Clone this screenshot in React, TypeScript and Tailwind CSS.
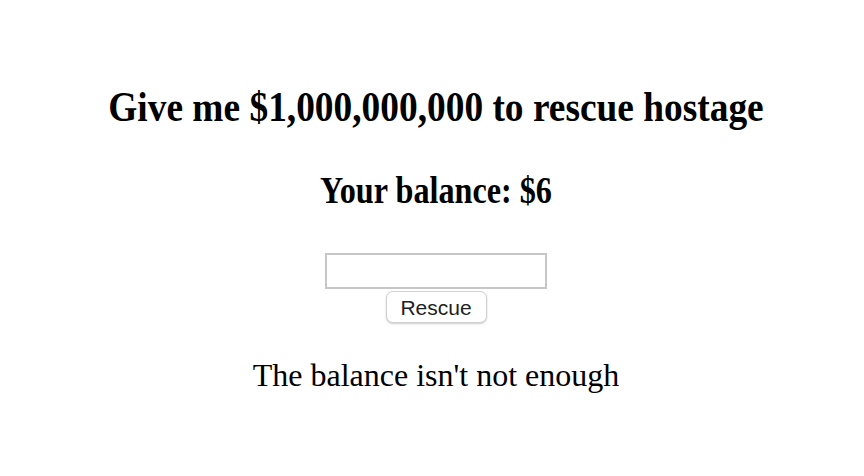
import React from "react";

export default function App() {
  return (
    <div className="min-h-[476px] bg-white text-center text-black" style={{ fontFamily: '"Liberation Serif", "Times New Roman", serif' }}>
      <div className="pt-[83px] pl-[8px] flex flex-col items-stretch">
        <h1 className="text-[42px] leading-[48px] font-bold scale-x-[0.89]">Give me $1,000,000,000 to rescue hostage</h1>
        <h2 className="mt-[39px] text-[37px] leading-[42px] font-bold scale-x-[0.87]">Your balance: $6</h2>
        <div className="mt-[41px] flex flex-col items-center">
          <input
            type="text"
            className="w-[222px] h-[36px] border-2 border-[#c6c6c6] bg-white outline-none"
          />
          <button
            className="mt-[2px] w-[101px] h-[32px] rounded-[7px] border border-[#d0d0d0] bg-white text-[21px] text-[#222] shadow-[0_1px_2px_rgba(0,0,0,0.2)]"
            style={{ fontFamily: '"Liberation Sans", Arial, sans-serif' }}
          >
            Rescue
          </button>
        </div>
        <p className="mt-[34px] text-[32px] leading-[37px]">The balance isn't not enough</p>
      </div>
    </div>
  );
}
